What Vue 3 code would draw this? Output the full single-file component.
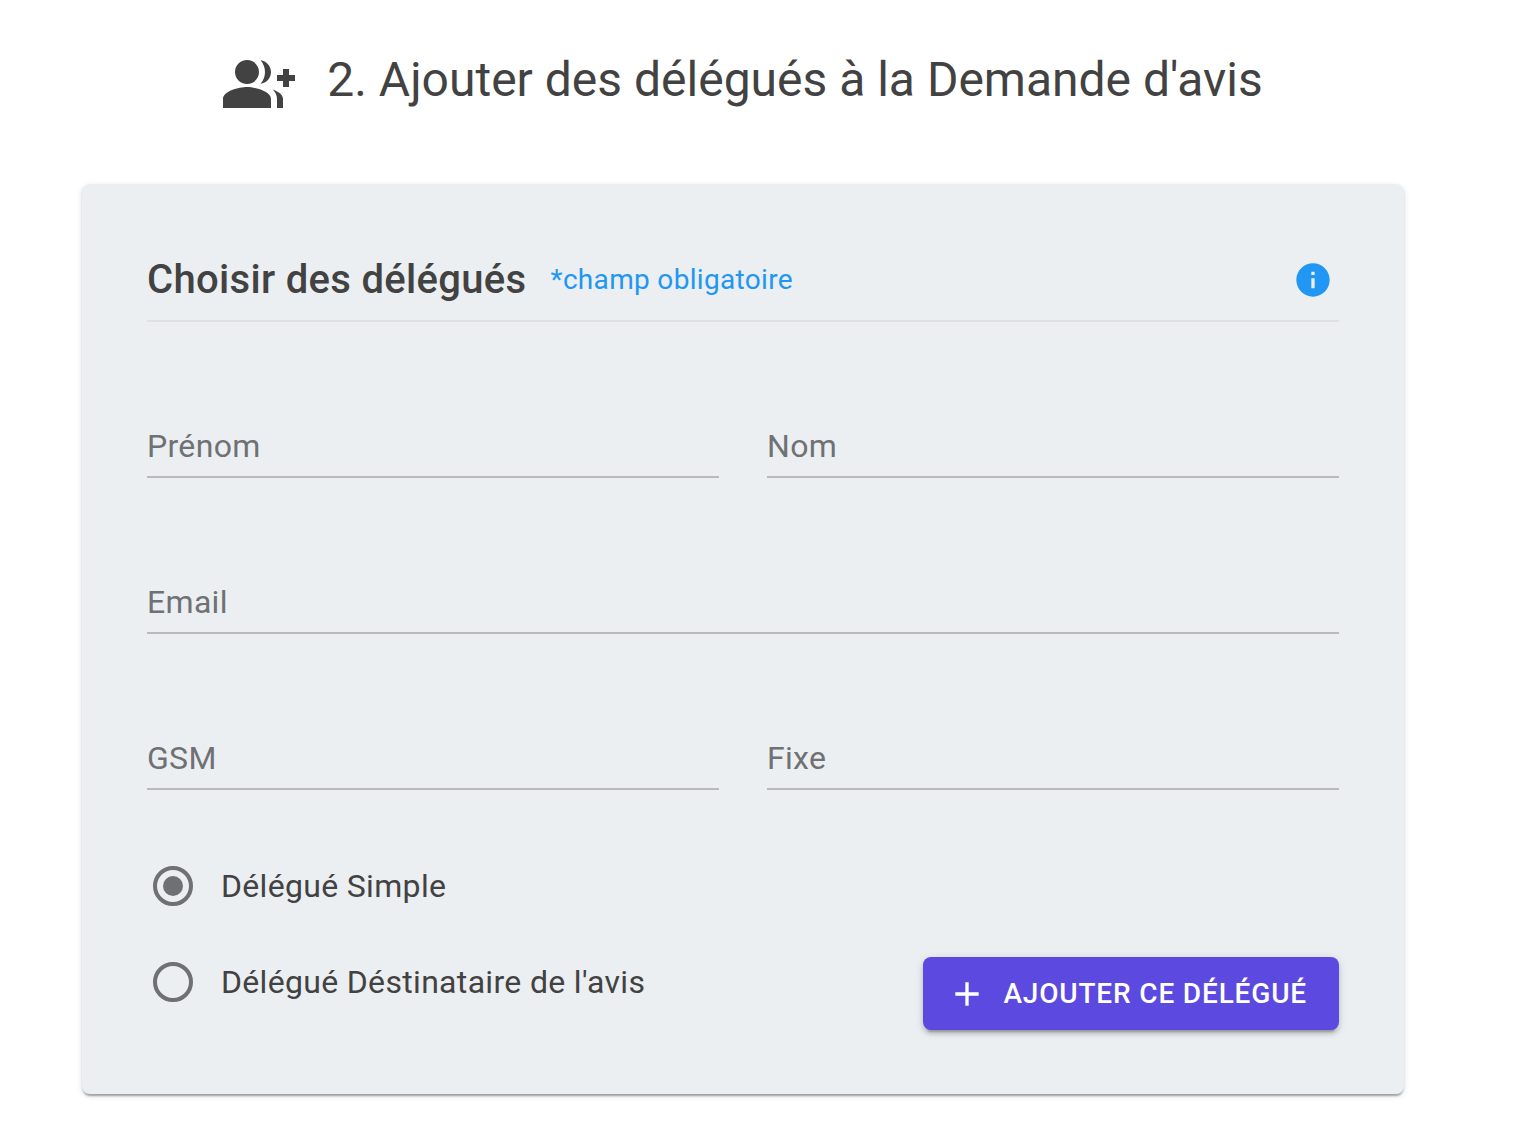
<script setup>
import { ref } from 'vue'

const firstName = ref('')
const lastName = ref('')
const email = ref('')
const mobile = ref('')
const phone = ref('')
const kind = ref('simple')
</script>

<template>
  <main class="page">
    <h1 class="title">
      <svg class="title-icon" viewBox="0 0 24 24" aria-hidden="true">
        <path d="M22 9V7h-2v2h-2v2h2v2h2v-2h2V9zM8 12c2.210 0 4-1.790 4-4s-1.790-4-4-4-4 1.790-4 4 1.790 4 4 4zm0 1c-2.670 0-8 1.340-8 4v3h16v-3c0-2.660-5.330-4-8-4zm4.510-8.950C13.430 5.110 14 6.490 14 8s-.57 2.890-1.490 3.950C14.470 11.700 16 10.040 16 8s-1.530-3.700-3.490-3.950zm4.020 9.780C17.420 14.660 18 15.700 18 17v3h2v-3c0-1.450-1.590-2.510-3.470-3.170z" />
      </svg>
      <span>2. Ajouter des délégués à la Demande d'avis</span>
    </h1>

    <form class="card" @submit.prevent>
      <header class="card-head">
        <h2>Choisir des délégués</h2>
        <span class="required">*champ obligatoire</span>
        <button type="button" class="info" aria-label="Informations">
          <svg viewBox="0 0 24 24" aria-hidden="true">
            <path d="M12 2C6.480 2 2 6.480 2 12s4.480 10 10 10 10-4.480 10-10S17.520 2 12 2zm1 15h-2v-6h2v6zm0-8h-2V7h2v2z" />
          </svg>
        </button>
      </header>

      <div class="fields">
        <input v-model="firstName" type="text" placeholder="Prénom" aria-label="Prénom">
        <input v-model="lastName" type="text" placeholder="Nom" aria-label="Nom">
        <input v-model="email" class="wide" type="email" placeholder="Email" aria-label="Email">
        <input v-model="mobile" type="tel" placeholder="GSM" aria-label="GSM">
        <input v-model="phone" type="tel" placeholder="Fixe" aria-label="Fixe">
      </div>

      <div class="card-foot">
        <div class="choices">
          <label><input v-model="kind" type="radio" name="kind" value="simple">Délégué Simple</label>
          <label><input v-model="kind" type="radio" name="kind" value="recipient">Délégué Déstinataire de l'avis</label>
        </div>
        <button type="submit" class="add">
          <svg viewBox="0 0 24 24" aria-hidden="true">
            <path d="M19 13h-6v6h-2v-6H5v-2h6V5h2v6h6v2z" />
          </svg>
          AJOUTER CE DÉLÉGUÉ
        </button>
      </div>
    </form>
  </main>
</template>

<style>
body {
  margin: 0;
  background: #fff;
}
</style>

<style scoped>
.page {
  padding: 48px 132px 52px 82px;
  font-family: Roboto, sans-serif;
  color: #424242;
}

.title {
  display: flex;
  align-items: flex-start;
  justify-content: center;
  gap: 32px;
  margin: 0 0 64px;
  font-size: 48px;
  line-height: 64px;
  font-weight: 400;
  white-space: nowrap;
}

.title-icon {
  width: 72px;
  height: 72px;
  fill: currentColor;
}

.card {
  box-sizing: border-box;
  padding: 64px 65px;
  border-radius: 8px;
  background: #ebeff2;
  box-shadow:
    0 4px 2px -2px rgba(0, 0, 0, 0.2),
    0 2px 2px rgba(0, 0, 0, 0.14),
    0 2px 6px rgba(0, 0, 0, 0.12);
  font-size: 32px;
  letter-spacing: 0.01em;
}

.card-head {
  display: flex;
  align-items: center;
  gap: 24px;
  padding-bottom: 8px;
  border-bottom: 2px solid #e0e0e0;
}

.card-head h2 {
  margin: 0;
  font-size: 40px;
  line-height: 64px;
  font-weight: 500;
}

.required {
  font-size: 28px;
  line-height: 32px;
  color: #2196f3;
}

.info {
  width: 40px;
  height: 40px;
  margin: 0 6px 0 auto;
  padding: 0;
  border: 0;
  background: none;
}

.info svg {
  display: block;
  fill: #2196f3;
}

.fields {
  display: grid;
  grid-template-columns: 1fr 1fr;
  gap: 92px 48px;
  padding-top: 92px;
}

.fields input {
  box-sizing: border-box;
  width: 100%;
  height: 64px;
  padding: 2px 0 0;
  border: 0;
  border-bottom: 2px solid #bababa;
  border-radius: 0;
  background: none;
  font: inherit;
  letter-spacing: inherit;
  color: inherit;
  outline: none;
}

.fields input::placeholder {
  color: #6f7173;
  opacity: 1;
}

.fields .wide {
  grid-column: 1 / -1;
}

.card-foot {
  display: flex;
  align-items: flex-end;
  justify-content: space-between;
  padding-top: 72px;
}

.choices {
  display: grid;
  gap: 48px;
  padding-bottom: 24px;
}

.choices label {
  display: flex;
  align-items: center;
  gap: 28px;
  height: 48px;
}

.choices input {
  display: grid;
  place-items: center;
  appearance: none;
  box-sizing: border-box;
  width: 40px;
  height: 40px;
  margin: 0 0 0 6px;
  border: 4px solid #6e7071;
  border-radius: 50%;
}

.choices input:checked::before {
  content: '';
  width: 20px;
  height: 20px;
  border-radius: 50%;
  background: #6e7071;
}

.add {
  display: flex;
  align-items: center;
  gap: 16px;
  height: 73px;
  padding: 0 32px 0 24px;
  border: 0;
  border-radius: 8px;
  background: #5b49e0;
  box-shadow:
    0 6px 2px -4px rgba(0, 0, 0, 0.2),
    0 4px 4px rgba(0, 0, 0, 0.14),
    0 2px 10px rgba(0, 0, 0, 0.12);
  color: #fff;
  font: 500 28px/36px Roboto, sans-serif;
  letter-spacing: 0.03em;
}

.add svg {
  width: 40px;
  height: 40px;
  fill: currentColor;
}
</style>
